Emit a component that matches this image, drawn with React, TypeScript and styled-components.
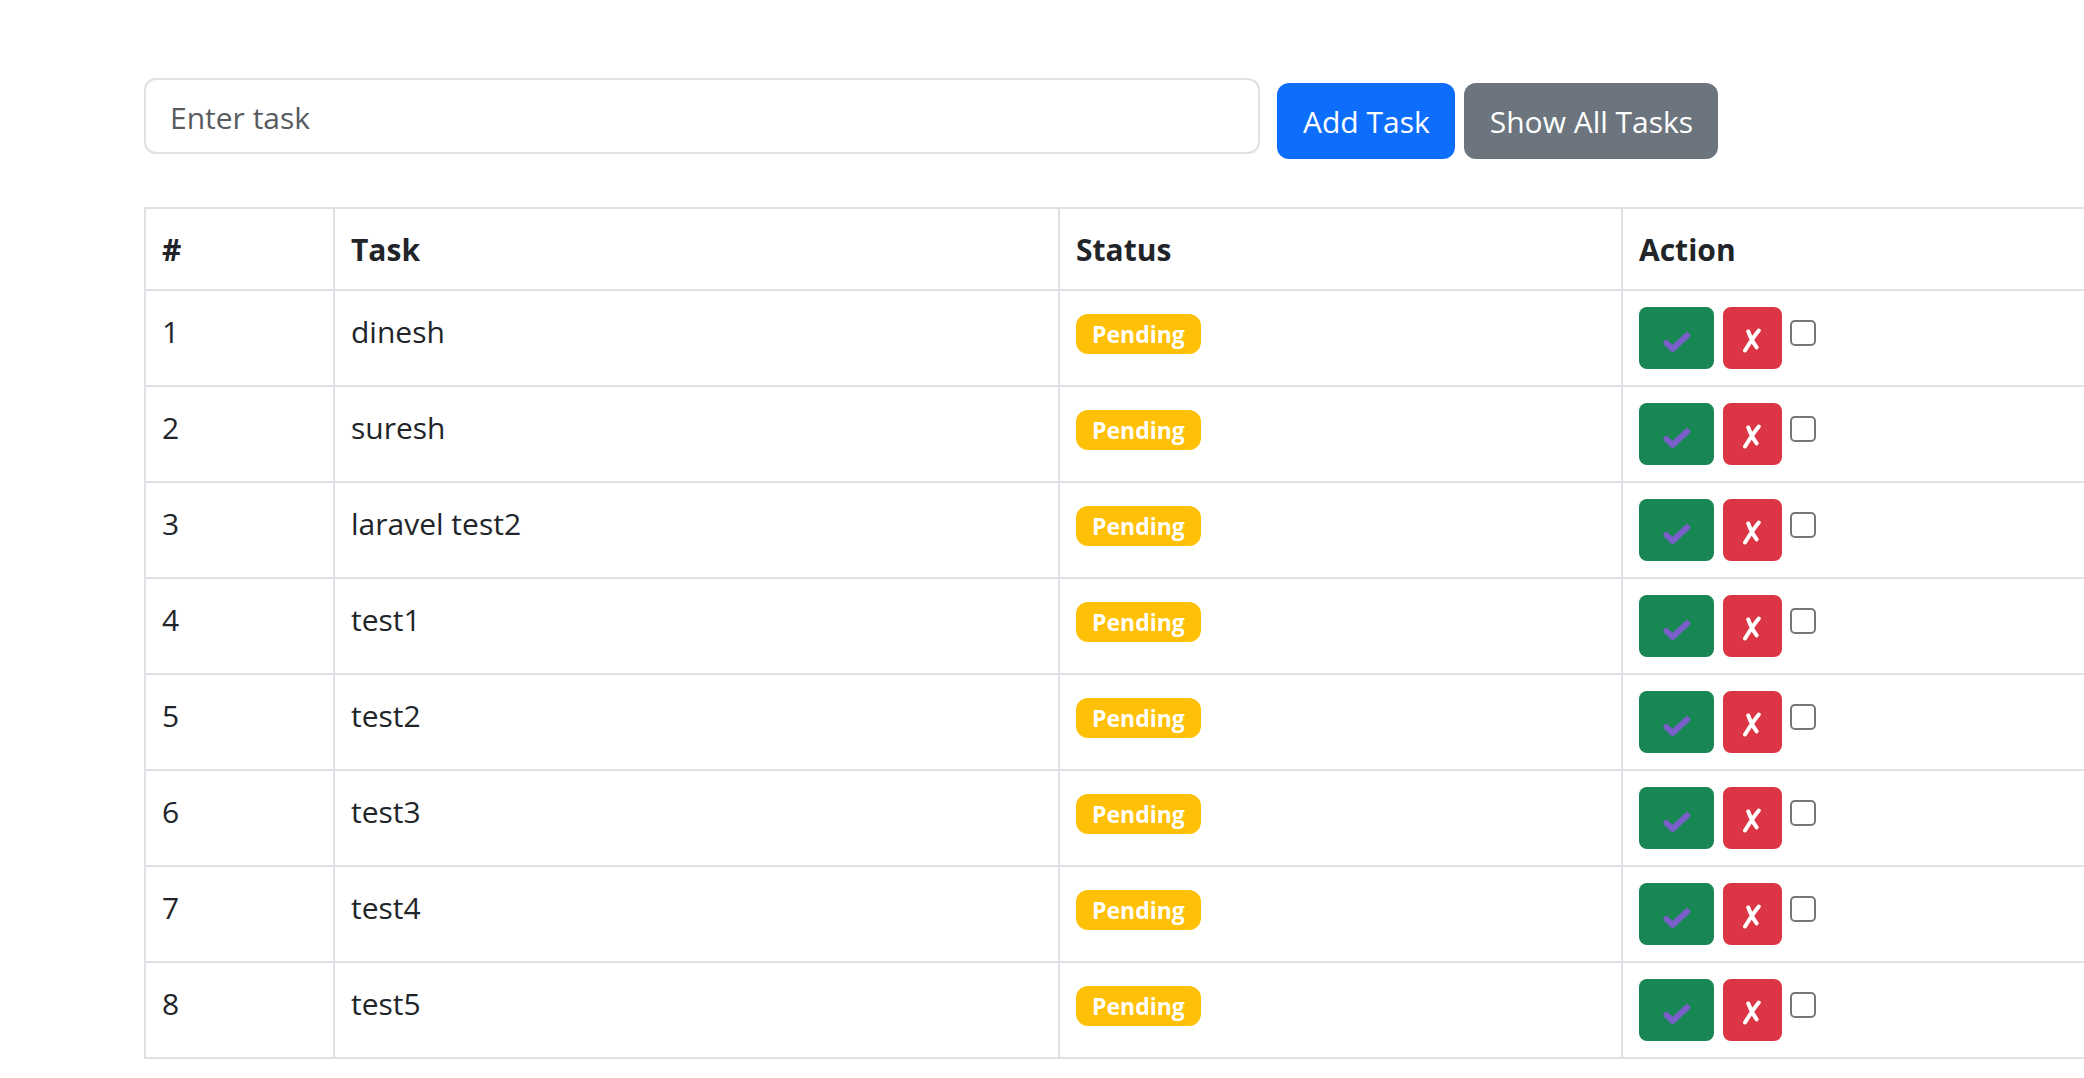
import React, { useState } from 'react';
import styled, { createGlobalStyle } from 'styled-components';

const GlobalStyle = createGlobalStyle`
  *, *::before, *::after { box-sizing: border-box; }
  body {
    margin: 0;
    background: #fff;
    color: #212529;
    font-family: "Open Sans", "Noto Sans", sans-serif;
    font-size: 30px;
    line-height: 50px;
  }
`;

const Page = styled.main`
  padding: 78px 0 18px 144px;
  overflow: hidden;
`;

const TaskForm = styled.form`
  display: flex;
  align-items: flex-start;
  gap: 17px;
  margin-bottom: 48px;
`;

const TaskInput = styled.input`
  flex: 0 1 1116px;
  min-width: 0;
  height: 76px;
  padding: 12px 24px 10px;
  border: 2px solid #dee2e6;
  border-radius: 12px;
  background: #fff;
  color: #212529;
  font: inherit;

  &::placeholder {
    color: #595c5f;
    opacity: 1;
  }
`;

const FormButtons = styled.div`
  display: flex;
  gap: 9px;
  padding-top: 5px;
`;

const Button = styled.button<{ $color: string }>`
  height: 76px;
  padding: 2px 25px 0 26px;
  border: 0;
  border-radius: 12px;
  background: ${(p) => p.$color};
  color: #fff;
  font: inherit;
  white-space: nowrap;
  cursor: pointer;
`;

const Table = styled.table`
  width: calc(100% + 2px);
  table-layout: fixed;
  border-collapse: collapse;
`;

const Col = styled.col<{ $width?: string }>`
  width: ${(p) => p.$width ?? 'auto'};
`;

const HeadCell = styled.th`
  padding: 16px 16px 14px;
  border: 2px solid #dee2e6;
  font-weight: 700;
  text-align: left;
`;

const Cell = styled.td`
  padding: 16px;
  border: 2px solid #dee2e6;
  vertical-align: top;
`;

const Badge = styled.span`
  display: block;
  width: fit-content;
  margin-top: 7px;
  padding: 1px 16px 0;
  border-radius: 12px;
  background: #ffc107;
  color: #fff;
  font-size: 23px;
  font-weight: 700;
  line-height: 39px;
`;

const Actions = styled.div`
  display: flex;
  align-items: flex-start;
  gap: 9px;
`;

const IconButton = styled.button<{ $color: string; $width: number }>`
  display: flex;
  justify-content: center;
  width: ${(p) => p.$width}px;
  height: 62px;
  padding: 20px 0 0;
  border: 0;
  border-radius: 8px;
  background: ${(p) => p.$color};
  cursor: pointer;
`;

const Checkbox = styled.input`
  appearance: none;
  width: 26px;
  height: 26px;
  margin: 13px 0 0 -1px;
  border: 2px solid #767676;
  border-radius: 5px;
  background: #fff;

  &:checked {
    background: #0d6efd;
    border-color: #0d6efd;
  }
`;

const CheckIcon = () => (
  <svg width="28" height="28" viewBox="0 0 28 28" fill="none" aria-hidden="true">
    <path d="M3.5 16 9.500 22 24 8.500" stroke="#7a5fc9" strokeWidth="6" strokeLinecap="round" strokeLinejoin="round" />
  </svg>
);

const CrossIcon = () => (
  <svg width="20" height="28" viewBox="0 0 20 28" fill="none" aria-hidden="true">
    <path d="M2 23.500C6.300 16.500 10.800 9.500 15.800 3.500M5.300 4.500C7.300 10 10.300 16 13.600 20.300" stroke="#fff" strokeWidth="4" strokeLinecap="round" />
  </svg>
);

const initialTasks = ['dinesh', 'suresh', 'laravel test2', 'test1', 'test2', 'test3', 'test4', 'test5'];

export default function App() {
  const [tasks, setTasks] = useState(initialTasks);
  const [draft, setDraft] = useState('');

  const addTask = (event: React.FormEvent) => {
    event.preventDefault();
    if (!draft.trim()) return;
    setTasks([...tasks, draft.trim()]);
    setDraft('');
  };

  return (
    <Page>
      <GlobalStyle />
      <TaskForm onSubmit={addTask}>
        <TaskInput
          type="text"
          aria-label="Enter task"
          placeholder="Enter task"
          value={draft}
          onChange={(event) => setDraft(event.target.value)}
        />
        <FormButtons>
          <Button type="submit" $color="#0d6efd">Add Task</Button>
          <Button type="button" $color="#6c757d">Show All Tasks</Button>
        </FormButtons>
      </TaskForm>
      <Table>
        <colgroup>
          <Col $width="189px" />
          <Col $width="725px" />
          <Col $width="563px" />
          <Col />
        </colgroup>
        <thead>
          <tr>
            <HeadCell scope="col">#</HeadCell>
            <HeadCell scope="col">Task</HeadCell>
            <HeadCell scope="col">Status</HeadCell>
            <HeadCell scope="col">Action</HeadCell>
          </tr>
        </thead>
        <tbody>
          {tasks.map((task, index) => (
            <tr key={index}>
              <Cell>{index + 1}</Cell>
              <Cell>{task}</Cell>
              <Cell><Badge>Pending</Badge></Cell>
              <Cell>
                <Actions>
                  <IconButton type="button" $color="#198754" $width={75} aria-label={`Complete ${task}`}>
                    <CheckIcon />
                  </IconButton>
                  <IconButton type="button" $color="#dc3545" $width={59} aria-label={`Delete ${task}`}>
                    <CrossIcon />
                  </IconButton>
                  <Checkbox type="checkbox" aria-label={`Select ${task}`} />
                </Actions>
              </Cell>
            </tr>
          ))}
        </tbody>
      </Table>
    </Page>
  );
}
